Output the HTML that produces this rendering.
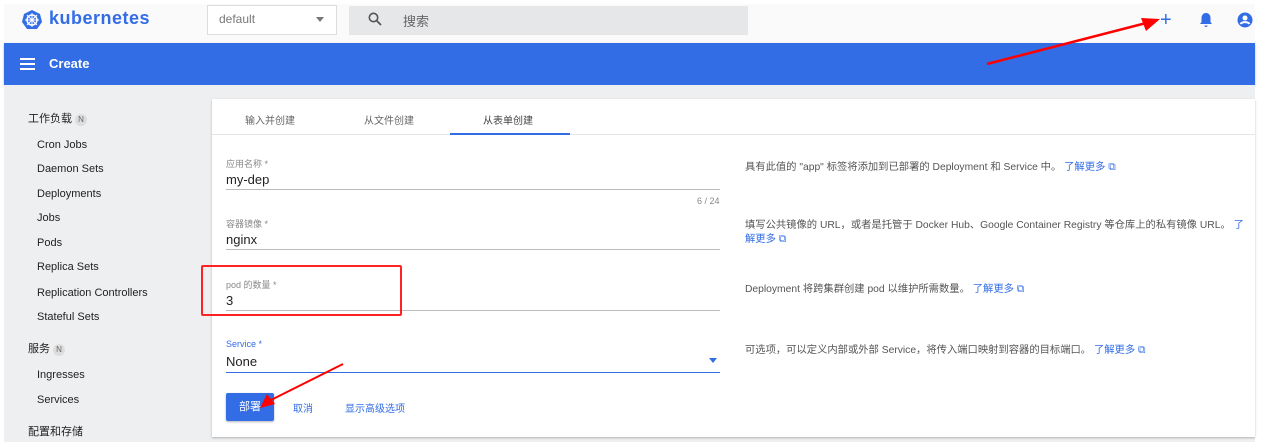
<html><head><style>
body{margin:0;width:1266px;height:442px;background:#fff;font-family:"Liberation Sans","Noto Sans CJK SC",sans-serif;position:relative;overflow:hidden}
.a{position:absolute}
.top{left:4px;top:4px;width:1251px;height:39px;background:#fafafa}
.blue{left:4px;top:43px;width:1251px;height:42px;background:#326de6;box-shadow:0 1px 2px rgba(0,0,0,.3)}
.main{left:4px;top:85px;width:1251px;height:357px;background:#eeeff1}
.side{font-size:11px;color:#222}
.card{left:212px;top:99px;width:1043px;height:338px;background:#fff;box-shadow:0 1px 2px rgba(0,0,0,.25)}
.lab{font-size:9px;color:#888}
.val{font-size:13px;color:#222}
.line{height:1px;background:#bbb;width:494px;left:226px}
.help{font-size:10.3px;color:#555}
.lnk{color:#326de6}
</style></head><body>
<div class="a top"></div>
<svg class="a" style="left:21px;top:9px" width="22" height="22" viewBox="0 0 22 22"><polygon points="11,1 19,5 21,13 16,20 6,20 1,13 3,5" fill="#326de6"/><circle cx="11" cy="11" r="5" fill="none" stroke="#fff" stroke-width="1.5"/><path d="M11 4v14M4 11h14M6 6l10 10M16 6L6 16" stroke="#fff" stroke-width="1"/></svg>
<div class="a" style="left:49px;top:8px;font-size:18px;font-weight:bold;color:#326de6;letter-spacing:.5px">kubernetes</div>
<div class="a" style="left:207px;top:5px;width:128px;height:28px;border:1px solid #ddd;background:#fff"></div>
<div class="a" style="left:219px;top:12px;font-size:12px;color:#777">default</div>
<div class="a" style="left:316px;top:17px;border:4px solid transparent;border-top:5px solid #777"></div>
<div class="a" style="left:349px;top:6px;width:399px;height:29px;background:#e6e7e8"></div>
<svg class="a" style="left:368px;top:12px" width="14" height="14" viewBox="0 0 14 14"><circle cx="5.5" cy="5.5" r="4.2" fill="none" stroke="#555" stroke-width="1.6"/><path d="M8.5 8.5L13 13" stroke="#555" stroke-width="1.8"/></svg>
<div class="a" style="left:403px;top:11px;font-size:13px;color:#666">搜索</div>
<div class="a" style="left:1160px;top:10px;font-size:20px;color:#326de6;line-height:20px">+</div>
<svg class="a" style="left:1199px;top:12px" width="14" height="16" viewBox="0 0 14 16"><path d="M7 1c-3 0-4.5 2.5-4.5 5v4L1 12h12l-1.5-2V6C11.5 3.5 10 1 7 1z M5.5 13.5a1.5 1.5 0 0 0 3 0z" fill="#326de6"/></svg>
<svg class="a" style="left:1237px;top:12px" width="16" height="16" viewBox="0 0 16 16"><circle cx="8" cy="8" r="7.5" fill="#326de6"/><circle cx="8" cy="6" r="2.5" fill="#fff"/><path d="M3.5 12c1.5-2.5 7.5-2.5 9 0" stroke="#fff" stroke-width="2" fill="none"/></svg>
<div class="a blue"></div>
<svg class="a" style="left:20px;top:58px" width="15" height="12"><path d="M0 1h15M0 6h15M0 11h15" stroke="#fff" stroke-width="2"/></svg>
<div class="a" style="left:49px;top:56px;font-size:13px;font-weight:bold;color:#fff">Create</div>
<div class="a main"></div>
<div class="a side" style="left:28px;top:110px;font-size:11px">工作负载 <span style="display:inline-block;width:12px;height:12px;border-radius:6px;background:#ddd;font-size:8px;text-align:center;line-height:12px;color:#666">N</span></div>
<div class="a side" style="left:37px;top:139px">Cron Jobs</div>
<div class="a side" style="left:37px;top:163px">Daemon Sets</div>
<div class="a side" style="left:37px;top:188px">Deployments</div>
<div class="a side" style="left:37px;top:212px">Jobs</div>
<div class="a side" style="left:37px;top:237px">Pods</div>
<div class="a side" style="left:37px;top:261px">Replica Sets</div>
<div class="a side" style="left:37px;top:287px">Replication Controllers</div>
<div class="a side" style="left:37px;top:311px">Stateful Sets</div>
<div class="a side" style="left:28px;top:340px">服务 <span style="display:inline-block;width:12px;height:12px;border-radius:6px;background:#ddd;font-size:8px;text-align:center;line-height:12px;color:#666">N</span></div>
<div class="a side" style="left:37px;top:369px">Ingresses</div>
<div class="a side" style="left:37px;top:394px">Services</div>
<div class="a side" style="left:28px;top:423px">配置和存储</div>
<div class="a card"></div>
<div class="a" style="left:212px;top:134px;width:1043px;height:1px;background:#e5e5e5"></div>
<div class="a" style="left:245px;top:112px;font-size:10px;color:#666">输入并创建</div>
<div class="a" style="left:364px;top:112px;font-size:10px;color:#666">从文件创建</div>
<div class="a" style="left:483px;top:112px;font-size:10px;color:#444">从表单创建</div>
<div class="a" style="left:450px;top:133px;width:120px;height:2px;background:#326de6"></div>
<div class="a lab" style="left:226px;top:157px">应用名称 *</div>
<div class="a val" style="left:226px;top:172px">my-dep</div>
<div class="a line" style="top:189px"></div>
<div class="a lab" style="left:697px;top:196px">6 / 24</div>
<div class="a lab" style="left:226px;top:217px">容器镜像 *</div>
<div class="a val" style="left:226px;top:232px">nginx</div>
<div class="a line" style="top:249px"></div>
<div class="a lab" style="left:226px;top:278px">pod 的数量 *</div>
<div class="a val" style="left:226px;top:293px">3</div>
<div class="a line" style="top:310px"></div>
<div class="a" style="left:201px;top:265px;width:197px;height:47px;border:2px solid #f22;border-radius:2px"></div>
<div class="a lab" style="left:226px;top:339px;color:#326de6">Service *</div>
<div class="a val" style="left:226px;top:354px">None</div>
<div class="a" style="left:709px;top:358px;border:4px solid transparent;border-top:5px solid #326de6"></div>
<div class="a line" style="top:372px;background:#326de6"></div>
<div class="a" style="left:226px;top:393px;width:48px;height:28px;background:#326de6;border-radius:2px;box-shadow:0 1px 2px rgba(0,0,0,.3);color:#fff;font-size:11px;text-align:center;line-height:28px">部署</div>
<div class="a lnk" style="left:293px;top:400px;font-size:10px">取消</div>
<div class="a lnk" style="left:345px;top:400px;font-size:10px">显示高级选项</div>
<svg class="a" style="left:255px;top:362px" width="90" height="50"><path d="M88 2L12 40" stroke="#f00" stroke-width="2"/><polygon points="5,46 12,32 20,42" fill="#f00"/></svg>
<svg class="a" style="left:985px;top:14px" width="175" height="55"><path d="M2 50L165 8" stroke="#f00" stroke-width="2.5"/><polygon points="175,5 156,4 161,17" fill="#f00"/></svg>
<div class="a help" style="left:745px;top:158px">具有此值的 "app" 标签将添加到已部署的 Deployment 和 Service 中。 <span class="lnk">了解更多 ⧉</span></div>
<div class="a help" style="left:745px;top:219px;width:505px;line-height:14px">填写公共镜像的 URL，或者是托管于 Docker Hub、Google Container Registry 等仓库上的私有镜像 URL。 <span class="lnk">了解更多 ⧉</span></div>
<div class="a help" style="left:745px;top:280px">Deployment 将跨集群创建 pod 以维护所需数量。 <span class="lnk">了解更多 ⧉</span></div>
<div class="a help" style="left:745px;top:341px">可选项，可以定义内部或外部 Service，将传入端口映射到容器的目标端口。 <span class="lnk">了解更多 ⧉</span></div>
</body></html>
